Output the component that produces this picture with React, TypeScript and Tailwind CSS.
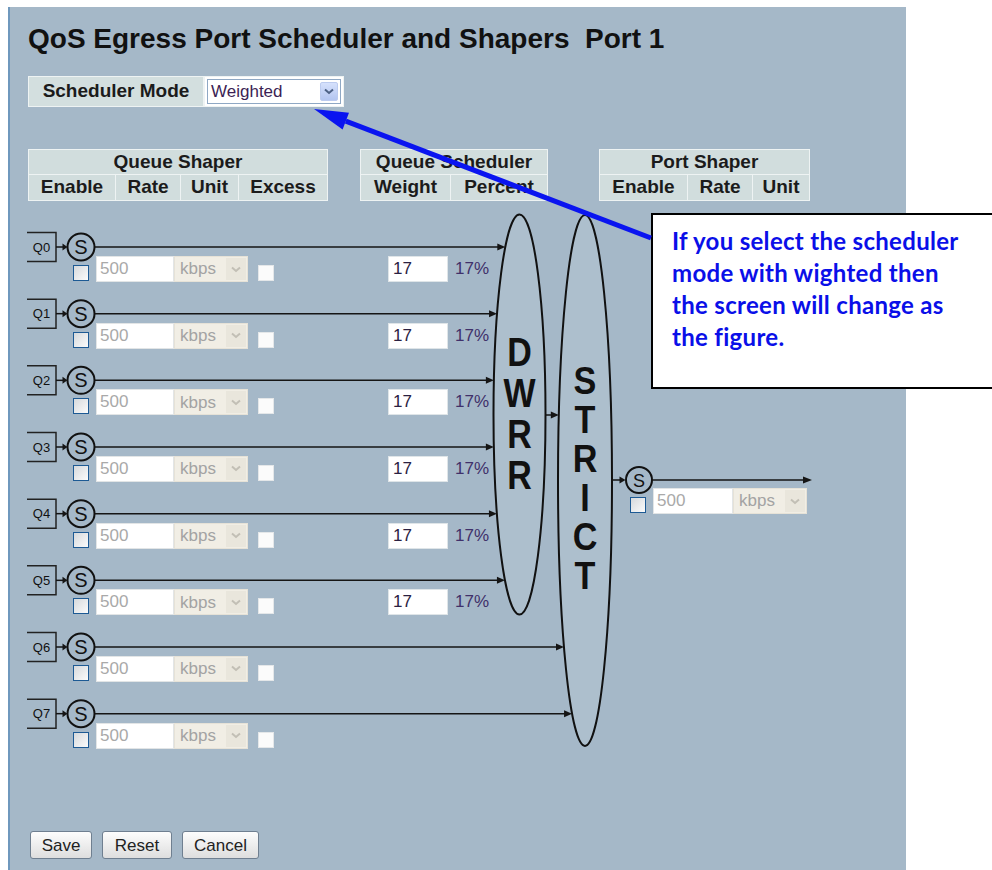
const ROW_H = 200 / 3;
const queues = [0, 1, 2, 3, 4, 5, 6, 7];

// ellipse geometry of the two scheduler blobs (page coords)
const DWRR = { cx: 519.5, cy: 415.5, rx: 26, ry: 200 };
const STRICT = { cx: 585, cy: 481.5, rx: 27, ry: 265.5 };

function leftEdge(e: { cx: number; cy: number; rx: number; ry: number }, y: number) {
  const t = (y - e.cy) / e.ry;
  return e.cx - e.rx * Math.sqrt(Math.max(0, 1 - t * t));
}

function Arrow({ x1, x2, y, head = 8 }: { x1: number; x2: number; y: number; head?: number }) {
  return (
    <g>
      <line x1={x1} y1={y} x2={x2 - head + 1} y2={y} stroke="#151515" strokeWidth={1.5} />
      <polygon points={`${x2},${y} ${x2 - head},${y - 3.5} ${x2 - head},${y + 3.5}`} fill="#151515" />
    </g>
  );
}

function EnableBox() {
  return <div className="w-[16px] h-[16px] border border-[#1d5a94] bg-gradient-to-br from-[#d6d9dc] to-[#fbfbfb]" />;
}

function ExcessBox() {
  return <div className="w-[16px] h-[16px] border border-[#e4e7e9] bg-[#fbfbfb]" />;
}

function Chevron({ color }: { color: string }) {
  return (
    <svg width="10" height="7" viewBox="0 0 10 7">
      <path d="M1 1.5 L5 5 L9 1.5" fill="none" stroke={color} strokeWidth="2" />
    </svg>
  );
}

function RateInput({ w }: { w: string }) {
  return (
    <input
      readOnly
      value="500"
      className={`${w} h-[26px] bg-white border border-[#e2e5e6] pl-[3px] text-[17px] text-[#a9a9a9] outline-none`}
    />
  );
}

function UnitSelect() {
  return (
    <div className="w-[74px] h-[26px] flex items-center bg-[#f1eee5] border border-[#e6e2d7]">
      <span className="flex-1 pl-[5px] text-[17px] text-[#a3a3a3]">kbps</span>
      <div className="w-[20px] h-[22px] mr-px flex items-center justify-center bg-[#e9e6dc]">
        <Chevron color="#c2bfb5" />
      </div>
    </div>
  );
}

function HeadCell({ w, children }: { w: string; children: React.ReactNode }) {
  return (
    <div className={`${w} h-[25px] bg-[#d1dddd] flex items-center justify-center font-bold text-[19px] text-[#1b1b1b]`}>
      {children}
    </div>
  );
}

function HeaderTable({ title, cols }: { title: string; cols: [string, string][] }) {
  return (
    <div className="bg-[#eef3f3] p-px flex flex-col gap-px">
      <div className="h-[24px] bg-[#d1dddd] flex items-center justify-center font-bold text-[19px] text-[#1b1b1b]">
        {title}
      </div>
      <div className="flex gap-px">
        {cols.map(([label, w]) => (
          <HeadCell key={label} w={w}>
            {label}
          </HeadCell>
        ))}
      </div>
    </div>
  );
}

function Diagram() {
  return (
    <svg
      className="absolute left-0 top-0 pointer-events-none overflow-visible"
      width="878"
      height="566"
      fontFamily="'Liberation Sans', Arial, sans-serif"
    >
      <g transform="translate(-28,-202)">
        <ellipse cx={DWRR.cx} cy={DWRR.cy} rx={DWRR.rx} ry={DWRR.ry} fill="#adbfcd" stroke="#111" strokeWidth={2} />
        <ellipse cx={STRICT.cx} cy={STRICT.cy} rx={STRICT.rx} ry={STRICT.ry} fill="#adbfcd" stroke="#111" strokeWidth={2} />

        {['D', 'W', 'R', 'R'].map((ch, i) => (
          <text
            key={i}
            transform={`translate(${DWRR.cx},${367 + i * 41}) scale(0.85,1)`}
            textAnchor="middle"
            fontSize="40"
            fontWeight="bold"
            fill="#111"
          >
            {ch}
          </text>
        ))}
        {['S', 'T', 'R', 'I', 'C', 'T'].map((ch, i) => (
          <text
            key={i}
            transform={`translate(${STRICT.cx},${395 + i * 39}) scale(0.9,1)`}
            textAnchor="middle"
            fontSize="38"
            fontWeight="bold"
            fill="#111"
          >
            {ch}
          </text>
        ))}

        {queues.map(i => {
          const y = 248 + i * ROW_H;
          const end = i < 6 ? leftEdge(DWRR, y) : leftEdge(STRICT, y);
          return (
            <g key={i}>
              <path d={`M27 ${y - 14.5} H56 V${y + 14.5} H27`} fill="none" stroke="#222" strokeWidth={1.5} />
              <text x={41.5} y={y + 4.5} textAnchor="middle" fontSize="13" fill="#111">
                Q{i}
              </text>
              <Arrow x1={56} x2={67.5} y={y} head={5} />
              <circle cx={81} cy={y} r={13.5} fill="none" stroke="#111" strokeWidth={2} />
              <text x={81} y={y + 7} textAnchor="middle" fontSize="20" fill="#111">
                S
              </text>
              <Arrow x1={94.5} x2={end} y={y} />
            </g>
          );
        })}

        <Arrow x1={545.5} x2={leftEdge(STRICT, 416)} y={416} />
        <Arrow x1={612} x2={625.5} y={481} head={6} />
        <circle cx={639} cy={481} r={13} fill="none" stroke="#111" strokeWidth={2} />
        <text x={639} y={487.5} textAnchor="middle" fontSize="18" fill="#111">
          S
        </text>
        <Arrow x1={652} x2={812} y={481} head={9} />
      </g>
    </svg>
  );
}

export default function App() {
  return (
    <div className="relative w-[992px] h-[870px] overflow-hidden bg-white font-['Liberation_Sans',Arial,sans-serif]">
      <div className="pt-[7px] pl-[8px]">
        <div className="w-[898px] h-[863px] bg-[#a5b8c8] border-l-2 border-[#6f98bd] pl-[18px] pt-[16px]">
          <h1 className="text-[28px] leading-[32px] font-bold text-[#111] whitespace-pre">
            QoS Egress Port Scheduler and Shapers  Port 1
          </h1>

          {/* scheduler mode */}
          <div className="mt-[21px] inline-flex bg-[#eef3f3] p-px gap-[2px]">
            <div className="w-[174px] h-[29px] bg-[#d3dfdf] flex items-center justify-center font-bold text-[19px] text-[#1b1b1b]">
              Scheduler Mode
            </div>
            <div className="w-[138px] h-[29px] bg-white p-[2px]">
              <div className="h-full flex items-center border border-[#8fa8c4] bg-white">
                <span className="flex-1 pl-[3px] text-[17px] text-[#3c1f55]">Weighted</span>
                <div className="w-[18px] h-[19px] mr-[2px] rounded-[2px] flex items-center justify-center bg-gradient-to-b from-[#d6e1fc] to-[#b3c5f0] border border-[#bccbef]">
                  <Chevron color="#4d6185" />
                </div>
              </div>
            </div>
          </div>

          {/* column headers */}
          <div className="mt-[42px] flex items-start">
            <HeaderTable
              title="Queue Shaper"
              cols={[
                ['Enable', 'w-[86px]'],
                ['Rate', 'w-[64px]'],
                ['Unit', 'w-[57px]'],
                ['Excess', 'w-[88px]'],
              ]}
            />
            <div className="ml-[32px]">
              <HeaderTable
                title="Queue Scheduler"
                cols={[
                  ['Weight', 'w-[89px]'],
                  ['Percent', 'w-[96px]'],
                ]}
              />
            </div>
            <div className="ml-[51px]">
              <HeaderTable
                title="Port Shaper"
                cols={[
                  ['Enable', 'w-[87px]'],
                  ['Rate', 'w-[64px]'],
                  ['Unit', 'w-[56px]'],
                ]}
              />
            </div>
          </div>

          {/* diagram with per-queue controls */}
          <div className="relative flex">
            <Diagram />
            <div className="w-[465px] pt-[32px]">
              {queues.map(i => (
                <div key={i} className="h-[66.67px] pt-[23px] flex items-start">
                  <div className="ml-[45px] mt-[9px]">
                    <EnableBox />
                  </div>
                  <div className="ml-[7px] flex">
                    <RateInput w="w-[78px]" />
                    <UnitSelect />
                  </div>
                  <div className="ml-[10px] mt-[9px]">
                    <ExcessBox />
                  </div>
                  {i < 6 && (
                    <>
                      <input
                        readOnly
                        value="17"
                        className="ml-[114px] w-[60px] h-[26px] bg-white border border-[#dfe5e8] pl-[4px] text-[17px] text-[#2b2142] outline-none"
                      />
                      <span className="ml-[7px] leading-[26px] text-[17px] text-[#40306a]">17%</span>
                    </>
                  )}
                </div>
              ))}
            </div>
            <div className="pl-[137px] pt-[287px] flex items-start">
              <div className="mt-[9px]">
                <EnableBox />
              </div>
              <div className="ml-[7px] flex">
                <RateInput w="w-[80px]" />
                <UnitSelect />
              </div>
            </div>
          </div>

          {/* buttons */}
          <div className="mt-[65px] ml-[2px] flex gap-[10px]">
            {[
              ['Save', 'w-[62px]'],
              ['Reset', 'w-[70px]'],
              ['Cancel', 'w-[77px]'],
            ].map(([label, w]) => (
              <button
                key={label}
                className={`${w} h-[28px] rounded-[3px] border border-[#6f7f90] bg-gradient-to-b from-[#fdfdfd] to-[#dedede] text-[17px] text-[#222]`}
              >
                {label}
              </button>
            ))}
          </div>
        </div>
      </div>

      {/* annotation callout */}
      <div className="absolute left-[651px] top-[213px] w-[341px] h-[176px] bg-white border-2 border-r-0 border-black pl-[19px] pt-[10px] font-['Lato',sans-serif] font-bold text-[24px] tracking-[0.3px] leading-[32px] text-[#0a0fe8]">
        If you select the scheduler
        <br />
        mode with wighted then
        <br />
        the screen will change as
        <br />
        the figure.
      </div>
      <svg className="absolute left-0 top-0 pointer-events-none" width="992" height="870">
        <line x1="651" y1="238" x2="345.8" y2="121.1" stroke="#0a14f0" strokeWidth="5" />
        <polygon points="314,109 342.6,129.5 349,112.7" fill="#0a14f0" />
      </svg>
    </div>
  );
}
